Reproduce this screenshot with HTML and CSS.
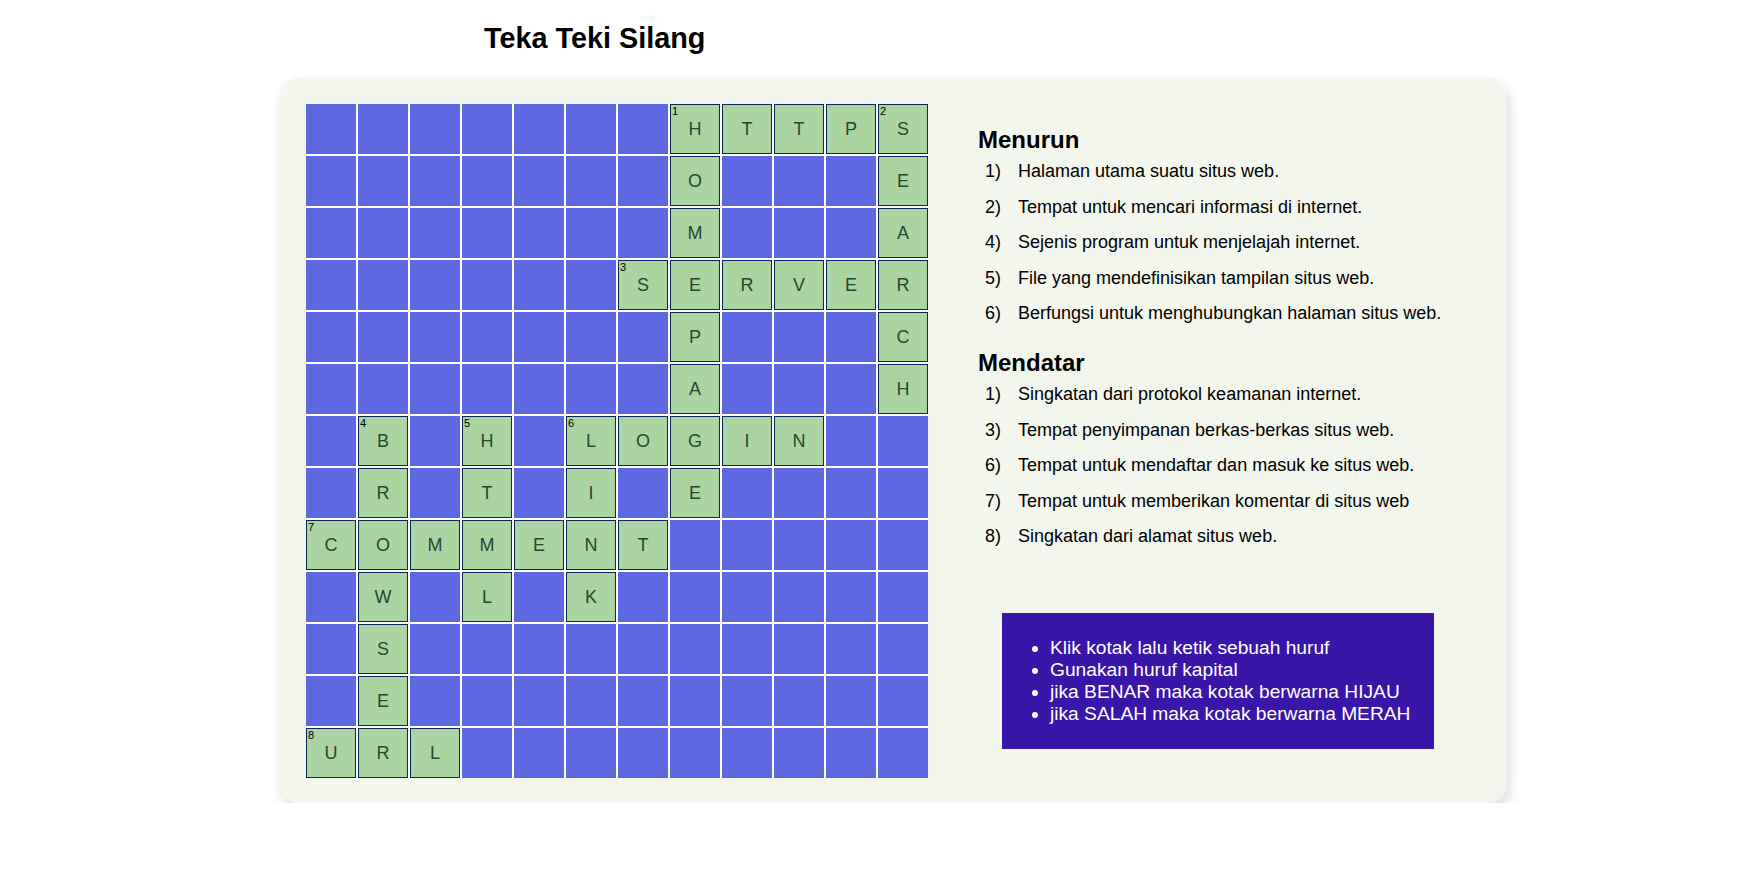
FILE: index.html
```html
<!DOCTYPE html>
<html lang="id">
<head>
<meta charset="utf-8">
<title>Teka Teki Silang</title>
<link rel="stylesheet" href="styles.css">
</head>
<body>
<h1 class="title">Teka Teki Silang</h1>
<div class="panel">
  <div class="grid">
    <!-- row 0 -->
    <div class="c"></div><div class="c"></div><div class="c"></div><div class="c"></div><div class="c"></div><div class="c"></div><div class="c"></div>
    <div class="c a"><span class="n">1</span>H</div><div class="c a">T</div><div class="c a">T</div><div class="c a">P</div><div class="c a"><span class="n">2</span>S</div>
    <!-- row 1 -->
    <div class="c"></div><div class="c"></div><div class="c"></div><div class="c"></div><div class="c"></div><div class="c"></div><div class="c"></div>
    <div class="c a">O</div><div class="c"></div><div class="c"></div><div class="c"></div><div class="c a">E</div>
    <!-- row 2 -->
    <div class="c"></div><div class="c"></div><div class="c"></div><div class="c"></div><div class="c"></div><div class="c"></div><div class="c"></div>
    <div class="c a">M</div><div class="c"></div><div class="c"></div><div class="c"></div><div class="c a">A</div>
    <!-- row 3 -->
    <div class="c"></div><div class="c"></div><div class="c"></div><div class="c"></div><div class="c"></div><div class="c"></div>
    <div class="c a"><span class="n">3</span>S</div><div class="c a">E</div><div class="c a">R</div><div class="c a">V</div><div class="c a">E</div><div class="c a">R</div>
    <!-- row 4 -->
    <div class="c"></div><div class="c"></div><div class="c"></div><div class="c"></div><div class="c"></div><div class="c"></div><div class="c"></div>
    <div class="c a">P</div><div class="c"></div><div class="c"></div><div class="c"></div><div class="c a">C</div>
    <!-- row 5 -->
    <div class="c"></div><div class="c"></div><div class="c"></div><div class="c"></div><div class="c"></div><div class="c"></div><div class="c"></div>
    <div class="c a">A</div><div class="c"></div><div class="c"></div><div class="c"></div><div class="c a">H</div>
    <!-- row 6 -->
    <div class="c"></div><div class="c a"><span class="n">4</span>B</div><div class="c"></div><div class="c a"><span class="n">5</span>H</div><div class="c"></div>
    <div class="c a"><span class="n">6</span>L</div><div class="c a">O</div><div class="c a">G</div><div class="c a">I</div><div class="c a">N</div><div class="c"></div><div class="c"></div>
    <!-- row 7 -->
    <div class="c"></div><div class="c a">R</div><div class="c"></div><div class="c a">T</div><div class="c"></div>
    <div class="c a">I</div><div class="c"></div><div class="c a">E</div><div class="c"></div><div class="c"></div><div class="c"></div><div class="c"></div>
    <!-- row 8 -->
    <div class="c a"><span class="n">7</span>C</div><div class="c a">O</div><div class="c a">M</div><div class="c a">M</div><div class="c a">E</div><div class="c a">N</div><div class="c a">T</div>
    <div class="c"></div><div class="c"></div><div class="c"></div><div class="c"></div><div class="c"></div>
    <!-- row 9 -->
    <div class="c"></div><div class="c a">W</div><div class="c"></div><div class="c a">L</div><div class="c"></div><div class="c a">K</div>
    <div class="c"></div><div class="c"></div><div class="c"></div><div class="c"></div><div class="c"></div><div class="c"></div>
    <!-- row 10 -->
    <div class="c"></div><div class="c a">S</div><div class="c"></div><div class="c"></div><div class="c"></div><div class="c"></div>
    <div class="c"></div><div class="c"></div><div class="c"></div><div class="c"></div><div class="c"></div><div class="c"></div>
    <!-- row 11 -->
    <div class="c"></div><div class="c a">E</div><div class="c"></div><div class="c"></div><div class="c"></div><div class="c"></div>
    <div class="c"></div><div class="c"></div><div class="c"></div><div class="c"></div><div class="c"></div><div class="c"></div>
    <!-- row 12 -->
    <div class="c a"><span class="n">8</span>U</div><div class="c a">R</div><div class="c a">L</div><div class="c"></div><div class="c"></div><div class="c"></div>
    <div class="c"></div><div class="c"></div><div class="c"></div><div class="c"></div><div class="c"></div><div class="c"></div>
  </div>

  <div class="clues">
    <h2 class="clue-title">Menurun</h2>
    <ul class="clue-list">
      <li><span class="num">1)</span>Halaman utama suatu situs web.</li>
      <li><span class="num">2)</span>Tempat untuk mencari informasi di internet.</li>
      <li><span class="num">4)</span>Sejenis program untuk menjelajah internet.</li>
      <li><span class="num">5)</span>File yang mendefinisikan tampilan situs web.</li>
      <li><span class="num">6)</span>Berfungsi untuk menghubungkan halaman situs web.</li>
    </ul>
    <h2 class="clue-title second">Mendatar</h2>
    <ul class="clue-list">
      <li><span class="num">1)</span>Singkatan dari protokol keamanan internet.</li>
      <li><span class="num">3)</span>Tempat penyimpanan berkas-berkas situs web.</li>
      <li><span class="num">6)</span>Tempat untuk mendaftar dan masuk ke situs web.</li>
      <li><span class="num">7)</span>Tempat untuk memberikan komentar di situs web</li>
      <li><span class="num">8)</span>Singkatan dari alamat situs web.</li>
    </ul>
    <div class="info">
      <ul class="info-list">
        <li>Klik kotak lalu ketik sebuah huruf</li>
        <li>Gunakan huruf kapital</li>
        <li>jika BENAR maka kotak berwarna HIJAU</li>
        <li>jika SALAH maka kotak berwarna MERAH</li>
      </ul>
    </div>
  </div>
</div>
</body>
</html>
```

FILE: styles.css
```css
html, body {
  margin: 0;
  padding: 0;
  background: #ffffff;
  font-family: "Liberation Sans", Arial, sans-serif;
  color: #000;
}

.title {
  margin: 0;
  padding: 22px 0 0 484px;
  font-size: 28.8px;
  line-height: 32px;
  font-weight: bold;
}

.panel {
  margin: 24px 0 0 280px;
  width: 1227px;
  box-sizing: border-box;
  padding: 26px 49px 25px 26px;
  background: #f3f6ec;
  border-radius: 18px;
  box-shadow: 2px 6px 14px rgba(0, 0, 0, 0.15);
  display: flex;
  gap: 50px;
  align-items: flex-start;
}

.grid {
  display: grid;
  grid-template-columns: repeat(12, 50px);
  grid-auto-rows: 50px;
  gap: 2px;
  background: #ffffff;
  flex: none;
}

.c {
  background: #5c67e0;
  position: relative;
}

.c.a {
  background: #aad5a0;
  border: 1px solid #0e2559;
  box-sizing: border-box;
  display: flex;
  align-items: center;
  justify-content: center;
  font-size: 18px;
  color: #1f4a2c;
}

.n {
  position: absolute;
  top: 0;
  left: 1px;
  font-size: 11px;
  line-height: 13px;
  color: #000;
}

.clues {
  width: 480px;
  padding-top: 22px;
  display: flex;
  flex-direction: column;
}

.clue-title {
  margin: 0;
  font-size: 24px;
  line-height: 28px;
  font-weight: bold;
}

.clue-title.second {
  margin-top: 17px;
}

.clue-list {
  list-style: none;
  margin: 0;
  padding: 0 0 0 7px;
  font-size: 18px;
  line-height: 35.6px;
}

.clue-list li {
  display: flex;
}

.num {
  width: 33px;
  flex: none;
}

.info {
  margin: 58px auto 0;
  width: 432px;
  box-sizing: border-box;
  padding: 5px 8px;
  background: #3a16a8;
  color: #ffffff;
}

.info-list {
  margin: 19px 0;
  padding-left: 40px;
  font-size: 19.2px;
  line-height: 22px;
}
```
